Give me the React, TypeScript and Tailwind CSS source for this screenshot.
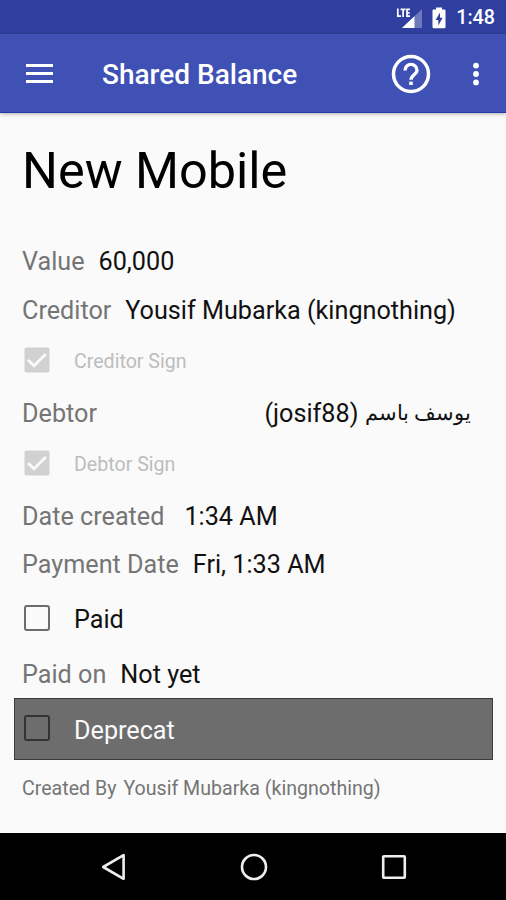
import React from "react";
import { clsx } from "clsx";

// ================= STATUS BAR =================
const StatusBar = () => (
  <div className="h-[34px] shrink-0 bg-[#303f9f] flex items-center justify-end pt-[1px] pr-[11px] text-white">
    <svg width="30" height="24" viewBox="0 0 30 24" className="mr-[7px]">
      <path d="M27 3 V22 H7 Z" fill="#fff" opacity="0.3" />
      <path d="M19.5 10.2 V22 H7 Z" fill="#fff" />
      <path
        d="M2.8 2.6 V10.2 H6 M5.6 3.4 H10.6 M8.1 3.4 V11 M15 3.4 H12 V10.2 H15 M12 6.8 H14.6"
        stroke="#fff"
        strokeWidth="1.7"
        fill="none"
      />
    </svg>
    <svg width="14" height="22" viewBox="0 0 14 22" className="mr-[10px]">
      <path
        d="M4 0.5 H10 V2.5 H12.4 Q13.5 2.5 13.5 3.6 V20 Q13.5 21.2 12.4 21.2 H1.6 Q0.5 21.2 0.5 20 V3.6 Q0.5 2.5 1.6 2.5 H4 Z"
        fill="#fff"
      />
      <path d="M8 5.5 L3.6 13 H6.3 V18.5 L10.6 10.8 H8 Z" fill="#303f9f" />
    </svg>
    <span className="pt-[1px] text-[19.7px] leading-none font-medium">1:48</span>
  </div>
);

// ================= APP BAR =================
const AppBar = () => (
  <header className="relative h-[79px] shrink-0 bg-[#3f51b5] border-b border-[#1f3aa6] shadow-[0_1px_4px_rgba(0,0,0,0.3)] flex items-center pt-[1px] pl-[26px] pr-[27px] text-white">
    <svg width="27" height="20" viewBox="0 0 27 20" fill="#fff">
      <rect y="0" width="27" height="3" />
      <rect y="8" width="27" height="3" />
      <rect y="16" width="27" height="3" />
    </svg>
    <h1 className="ml-[49px] pt-[3px] text-[28px] leading-none font-medium">
      Shared Balance
    </h1>
    <svg
      width="40"
      height="40"
      viewBox="0 0 40 40"
      className="ml-auto"
      fill="none"
      stroke="#fff"
    >
      <circle cx="20" cy="20" r="17.5" strokeWidth="3.5" />
      <path
        d="M14 16.4 a6 6 0 1 1 12 0 c0 4.2 -6 4.6 -6 9.4"
        strokeWidth="3.4"
      />
      <rect x="18.2" y="27.6" width="3.6" height="3.4" fill="#fff" stroke="none" />
    </svg>
    <svg width="6" height="24" viewBox="0 0 6 24" className="ml-[42px]" fill="#fff">
      <circle cx="3" cy="3.6" r="2.9" />
      <circle cx="3" cy="12" r="2.9" />
      <circle cx="3" cy="20.4" r="2.9" />
    </svg>
  </header>
);

type FieldProps = {
  label: string;
  className: string;
  children: React.ReactNode;
};

const Field = ({ label, className, children }: FieldProps) => (
  <div className={clsx("flex items-center px-[22px] pt-[2px] text-[25.2px]", className)}>
    <span className="text-[#757575]">{label}</span>
    {children}
  </div>
);

const CheckedBox = () => (
  <svg width="26" height="26" viewBox="0 0 26 26" className="-mt-[2px]">
    <rect x="0.5" y="0.5" width="25" height="25" rx="2" fill="#d1d1d1" />
    <path d="M4 13 L10 18.8 L21.8 7" stroke="#fafafa" strokeWidth="2.8" fill="none" />
  </svg>
);

const SignRow = ({ label }: { label: string }) => (
  <div className="h-[54px] flex items-center pl-[24px] text-[#bdbdbd]">
    <CheckedBox />
    <span className="ml-[24px] pt-[2px] text-[19.6px]">{label}</span>
  </div>
);

// ================= NAVIGATION BAR =================
const NavBar = () => (
  <nav className="h-[67px] shrink-0 bg-black flex items-center justify-between pl-[101px] pr-[99px]">
    <svg width="26" height="30" viewBox="0 0 26 30" fill="none" stroke="#eee" strokeWidth="2.6">
      <path d="M2.2 15 L22.6 3.2 V26.8 Z" strokeLinejoin="round" />
    </svg>
    <svg width="28" height="28" viewBox="0 0 28 28" fill="none" stroke="#eee" strokeWidth="2.6" className="-ml-[1px]">
      <circle cx="14" cy="14" r="12" />
    </svg>
    <svg width="26" height="26" viewBox="0 0 26 26" fill="none" stroke="#eee" strokeWidth="2.6">
      <rect x="2.2" y="2.2" width="21.6" height="21.6" rx="0.8" />
    </svg>
  </nav>
);

export default function App() {
  return (
    <div className="w-[506px] h-[900px] flex flex-col bg-[#fafafa] font-['Roboto','Noto_Sans',sans-serif] leading-none text-[#111] whitespace-nowrap overflow-hidden">
      <StatusBar />
      <AppBar />

      <main className="flex-1 flex flex-col">
        <h2 className="h-[124px] pt-[33px] pl-[22px] text-[50.4px] text-black">
          New Mobile
        </h2>

        <Field label="Value" className="h-[48px]">
          <span className="ml-[14px]">60,000</span>
        </Field>
        <Field label="Creditor" className="h-[49px]">
          <span className="ml-[14px]">Yousif Mubarka (kingnothing)</span>
        </Field>
        <SignRow label="Creditor Sign" />
        <Field label="Debtor" className="h-[49px]">
          <span dir="rtl" className="ml-auto mr-[13px]">
            <span className="align-[2px] text-[21.4px]">يوسف باسم</span> (josif88)
          </span>
        </Field>
        <SignRow label="Debtor Sign" />
        <Field label="Date created" className="h-[49px]">
          <span className="ml-[20px]">1:34 AM</span>
        </Field>
        <Field label="Payment Date" className="h-[48px]">
          <span className="ml-[14px]">Fri, 1:33 AM</span>
        </Field>

        <div className="h-[62px] flex items-center pl-[24px] text-[25.2px]">
          <span className="size-[26px] -mt-[2px] rounded-[3px] border-2 border-[#6c6c6c]" />
          <span className="ml-[24px] pt-[2px]">Paid</span>
        </div>
        <Field label="Paid on" className="h-[48px]">
          <span className="ml-[14px]">Not yet</span>
        </Field>

        <div className="h-[62px] ml-[14px] mr-[13px] pl-[9px] flex items-center border border-[#3c3c3c] bg-[#6d6d6d] text-[25.2px] text-[#fafafa]">
          <span className="size-[26px] -mt-[2px] rounded-[3px] border-2 border-[#333]" />
          <span className="ml-[24px] pt-[3px]">Deprecat</span>
        </div>

        <p className="h-[57px] flex items-center pt-[1px] pl-[22px] text-[19.6px] text-[#757575]">
          Created By
          <span className="ml-[7px]">Yousif Mubarka (kingnothing)</span>
        </p>
      </main>

      <NavBar />
    </div>
  );
}
